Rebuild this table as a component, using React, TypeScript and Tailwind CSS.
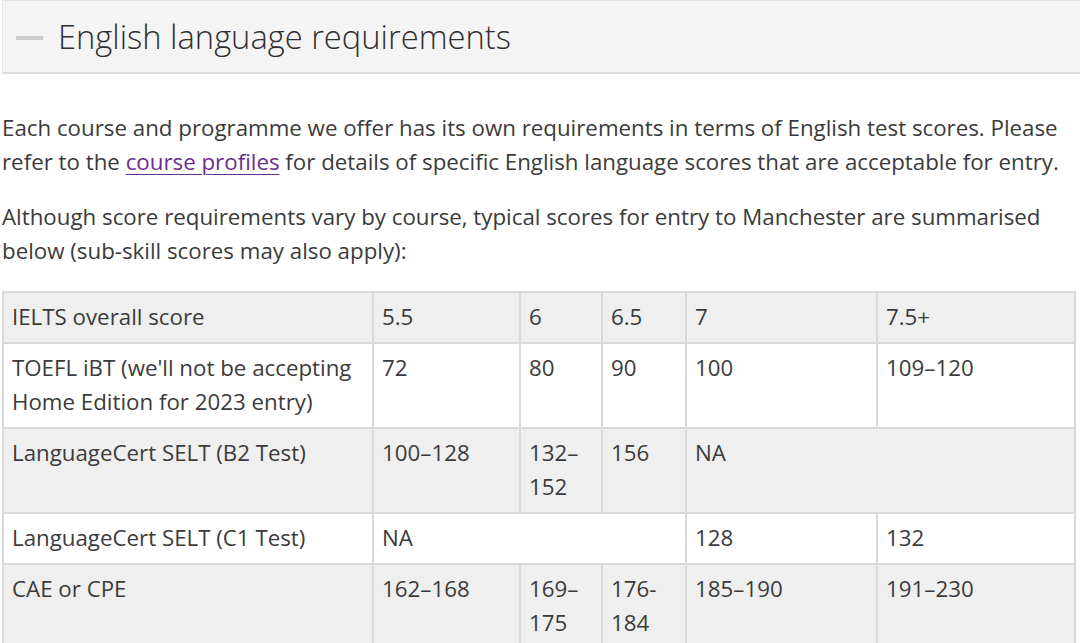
const ROWS: { cells: { text: string; span?: number }[] }[] = [
  { cells: [{ text: 'IELTS overall score' }, { text: '5.5' }, { text: '6' }, { text: '6.5' }, { text: '7' }, { text: '7.5+' }] },
  {
    cells: [
      { text: "TOEFL iBT (we'll not be accepting Home Edition for 2023 entry)" },
      { text: '72' },
      { text: '80' },
      { text: '90' },
      { text: '100' },
      { text: '109–120' },
    ],
  },
  {
    cells: [
      { text: 'LanguageCert SELT (B2 Test)' },
      { text: '100–128' },
      { text: '132–152' },
      { text: '156' },
      { text: 'NA', span: 2 },
    ],
  },
  { cells: [{ text: 'LanguageCert SELT (C1 Test)' }, { text: 'NA', span: 3 }, { text: '128' }, { text: '132' }] },
  {
    cells: [
      { text: 'CAE or CPE' },
      { text: '162–168' },
      { text: '169–175' },
      { text: '176-184' },
      { text: '185–190' },
      { text: '191–230' },
    ],
  },
];

export default function App() {
  return (
    <div className="w-[1080px] h-[643px] overflow-hidden bg-white pl-[2px] font-['Open_Sans',sans-serif] text-[#3b3b3b]">
      {/* accordion header */}
      <div className="flex h-[74px] items-center gap-[15px] border-t border-l border-[#e6e6e6] border-b-2 border-b-[#dcdcdc] bg-[#f4f4f4] pl-[13px] pt-[2px]">
        <span className="block h-[4px] w-[27px] bg-[#cccccc]" />
        <h2 className="text-[32.7px] font-light leading-none text-[#2f2f2f]">English language requirements</h2>
      </div>

      <div className="text-[22.3px] leading-[34px]">
        <p className="mt-[37px] w-[1072px]">
          Each course and programme we offer has its own requirements in terms of English test scores. Please
          refer to the{' '}
          <a href="#" className="text-[#6b2d8f] underline underline-offset-4 decoration-1">
            course profiles
          </a>{' '}
          for details of specific English language scores that are acceptable for entry.
        </p>
        <p className="mt-[21px] w-[1072px]">
          Although score requirements vary by course, typical scores for entry to Manchester are summarised
          below (sub-skill scores may also apply):
        </p>

        <table className="mt-[23px] w-[1072px] table-fixed border-collapse">
          <colgroup>
            <col className="w-[370px]" />
            <col className="w-[147px]" />
            <col className="w-[82px]" />
            <col className="w-[84px]" />
            <col className="w-[191px]" />
            <col className="w-[198px]" />
          </colgroup>
          <tbody>
            {ROWS.map((row, i) => (
              <tr key={i} className={i % 2 === 0 ? 'bg-[#efefef]' : 'bg-white'}>
                {row.cells.map((c, j) => (
                  <td
                    key={j}
                    colSpan={c.span}
                    className="border-2 border-[#d9d9d9] px-[8px] pt-[7px] pb-[8px] align-top"
                  >
                    {c.text}
                  </td>
                ))}
              </tr>
            ))}
          </tbody>
        </table>
      </div>
    </div>
  );
}
